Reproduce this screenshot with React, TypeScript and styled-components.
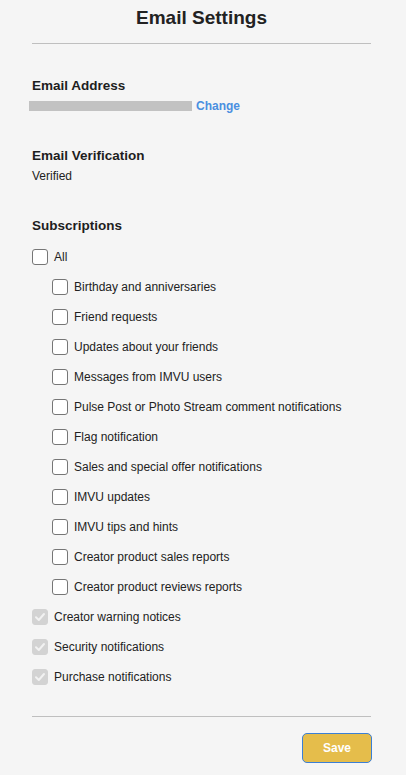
import React from "react";
import styled, { createGlobalStyle } from "styled-components";

const Global = createGlobalStyle`
  html, body { margin: 0; padding: 0; background: #f5f5f5; }
  body { font-family: "Liberation Sans", Arial, sans-serif; color: #222; }
`;

const Page = styled.div`
  padding: 0 35px 0 32px;
  background: #f5f5f5;
  min-height: 775px;
  box-sizing: border-box;
`;

const Title = styled.h1`
  margin: 0;
  font-size: 19px;
  font-weight: 700;
  line-height: 36px;
  text-align: center;
  color: #222;
`;

const Divider = styled.div<{ $top: number }>`
  height: 1px;
  background: #bfbfbf;
  margin-top: ${(p) => p.$top}px;
`;

const Section = styled.section<{ $top: number }>`
  margin-top: ${(p) => p.$top}px;
`;

const Heading = styled.h2`
  margin: 0;
  font-size: 13.5px;
  font-weight: 700;
  line-height: 20px;
  color: #1e1e1e;
`;

const Value = styled.div`
  font-size: 12px;
  line-height: 20px;
  display: flex;
  align-items: center;
  gap: 4px;
`;

const Masked = styled.span`
  display: inline-block;
  width: 163px;
  height: 10px;
  background: #c2c2c2;
  margin-left: -3px;
`;

const Link = styled.a`
  color: #4a8fe0;
  font-weight: 700;
  text-decoration: none;
  cursor: pointer;
`;

const List = styled.div`
  margin-top: 6px;
  display: flex;
  flex-direction: column;
`;

const Row = styled.label<{ $indent?: boolean }>`
  height: 30px;
  display: flex;
  align-items: center;
  gap: 6px;
  padding-left: ${(p) => (p.$indent ? 20 : 0)}px;
  font-size: 12px;
  color: #222;
`;

const Box = styled.span<{ $disabled?: boolean }>`
  width: 16px;
  height: 16px;
  box-sizing: border-box;
  border-radius: 3px;
  border: 1px solid ${(p) => (p.$disabled ? "#d3d3d3" : "#767676")};
  background: ${(p) => (p.$disabled ? "#d3d3d3" : "#fff")};
  display: flex;
  align-items: center;
  justify-content: center;
  flex-shrink: 0;
`;

const Footer = styled.div`
  display: flex;
  justify-content: flex-end;
  margin-top: 16px;
`;

const SaveButton = styled.button`
  width: 70px;
  height: 30px;
  box-sizing: border-box;
  border: 1px solid #3b7fd6;
  border-radius: 5px;
  background: #e5bd4b;
  color: #fff;
  font-family: "Liberation Sans", Arial, sans-serif;
  font-weight: 700;
  font-size: 12px;
  margin-right: -1px;
  cursor: pointer;
`;

const Check = () => (
  <svg width="12" height="12" viewBox="0 0 12 12">
    <path d="M2 6.3 L4.8 9 L10 3" fill="none" stroke="#f2f2f2" strokeWidth="2" strokeLinecap="round" strokeLinejoin="round" />
  </svg>
);

const nested = [
  "Birthday and anniversaries",
  "Friend requests",
  "Updates about your friends",
  "Messages from IMVU users",
  "Pulse Post or Photo Stream comment notifications",
  "Flag notification",
  "Sales and special offer notifications",
  "IMVU updates",
  "IMVU tips and hints",
  "Creator product sales reports",
  "Creator product reviews reports",
];

const locked = ["Creator warning notices", "Security notifications", "Purchase notifications"];

export default function App() {
  return (
    <>
      <Global />
      <Page>
        <Title>Email Settings</Title>
        <Divider $top={7} />
        <Section $top={32}>
          <Heading>Email Address</Heading>
          <Value>
            <Masked />
            <Link>Change</Link>
          </Value>
        </Section>
        <Section $top={30}>
          <Heading>Email Verification</Heading>
          <Value>Verified</Value>
        </Section>
        <Section $top={30}>
          <Heading>Subscriptions</Heading>
          <List>
            <Row>
              <Box />
              All
            </Row>
            {nested.map((n) => (
              <Row key={n} $indent>
                <Box />
                {n}
              </Row>
            ))}
            {locked.map((n) => (
              <Row key={n}>
                <Box $disabled>
                  <Check />
                </Box>
                {n}
              </Row>
            ))}
          </List>
        </Section>
        <Divider $top={24} />
        <Footer>
          <SaveButton>Save</SaveButton>
        </Footer>
      </Page>
    </>
  );
}
